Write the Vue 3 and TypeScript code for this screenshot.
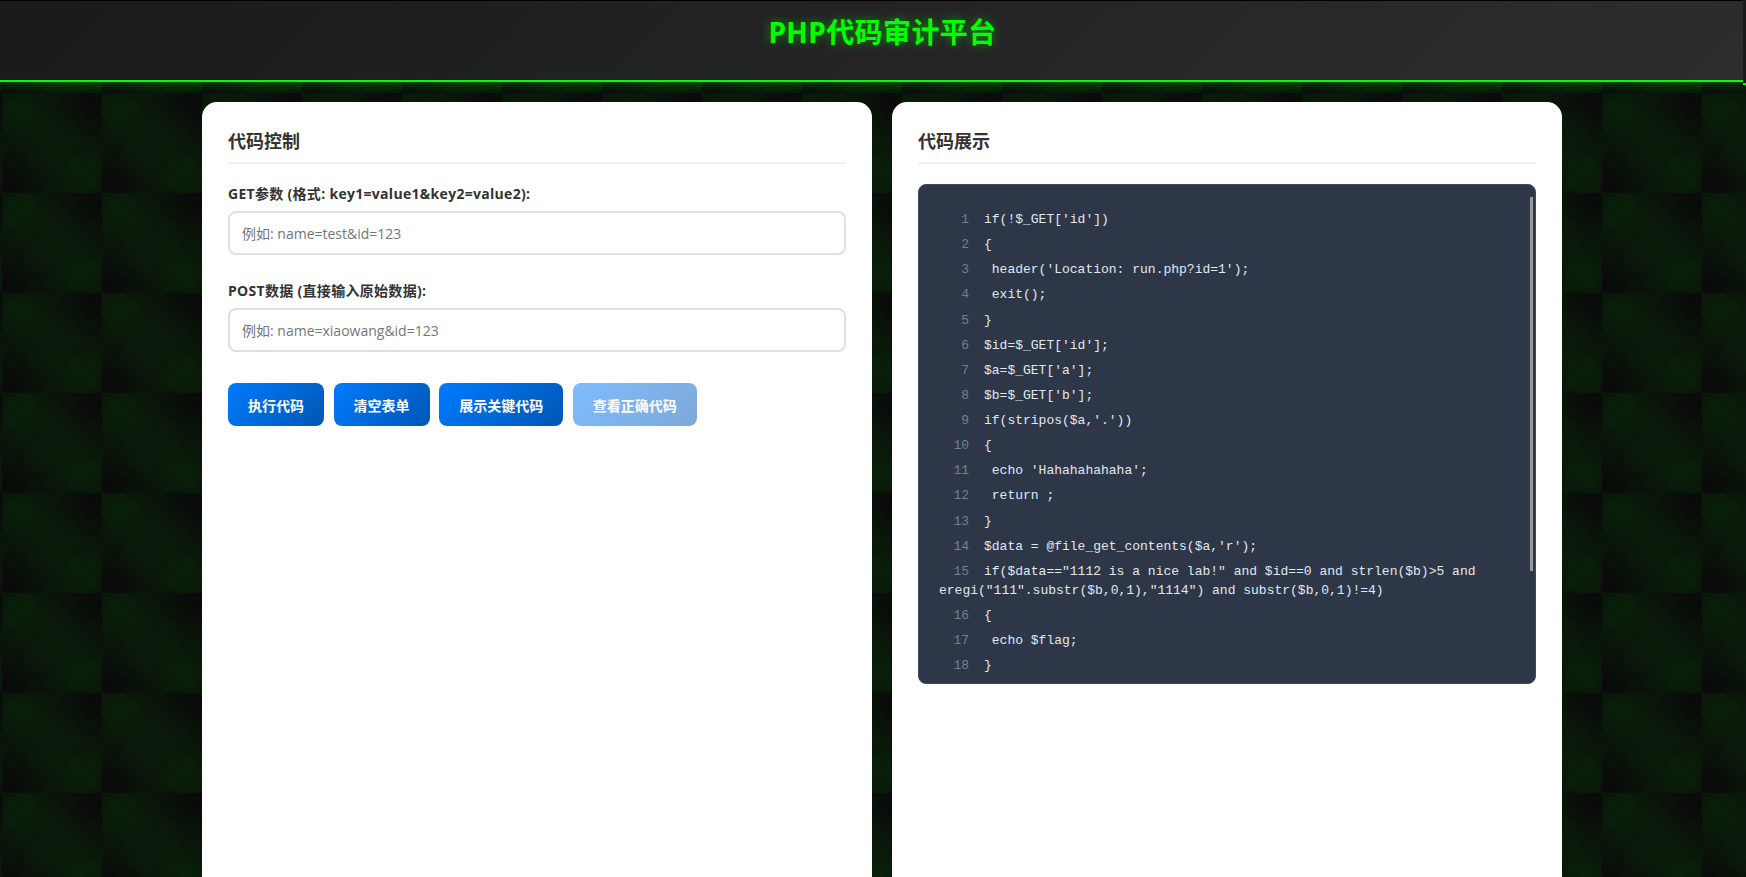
<script setup lang="ts">
const lines: string[] = [
  `if(!$_GET['id'])`,
  `{`,
  ` header('Location: run.php?id=1');`,
  ` exit();`,
  `}`,
  `$id=$_GET['id'];`,
  `$a=$_GET['a'];`,
  `$b=$_GET['b'];`,
  `if(stripos($a,'.'))`,
  `{`,
  ` echo 'Hahahahahaha';`,
  ` return ;`,
  `}`,
  `$data = @file_get_contents($a,'r');`,
  `if($data=="1112 is a nice lab!" and $id==0 and strlen($b)>5 and eregi("111".substr($b,0,1),"1114") and substr($b,0,1)!=4)`,
  `{`,
  ` echo $flag;`,
  `}`,
]
</script>

<template>
  <div class="page">
    <header class="top">
      <h1 class="title">PHP代码审计平台</h1>
    </header>
    <main class="columns">
      <section class="card">
        <h2 class="card-title">代码控制</h2>
        <div class="field">
          <label class="label">GET参数 (格式: key1=value1&amp;key2=value2):</label>
          <input class="input" type="text" placeholder="例如: name=test&id=123" />
        </div>
        <div class="field">
          <label class="label">POST数据 (直接输入原始数据):</label>
          <input class="input" type="text" placeholder="例如: name=xiaowang&id=123" />
        </div>
        <div class="actions">
          <button class="btn" type="button">执行代码</button>
          <button class="btn" type="button">清空表单</button>
          <button class="btn" type="button">展示关键代码</button>
          <button class="btn btn-dim" type="button">查看正确代码</button>
        </div>
      </section>
      <section class="card">
        <h2 class="card-title">代码展示</h2>
        <div class="code">
          <div class="code-scroll">
            <div v-for="(line, i) in lines" :key="i" class="code-line"><span class="num">{{ i + 1 }}</span>{{ line }}</div>
          </div>
          <div class="thumb"></div>
        </div>
      </section>
    </main>
  </div>
</template>

<style>
html, body {
  margin: 0;
  height: 877px;
  overflow: hidden;
}
body {
  background-color: #0a0a0a;
  background-image:
    repeating-linear-gradient(45deg, transparent 0, transparent 13.142px, rgba(0, 255, 0, 0.025) 13.142px, rgba(0, 255, 0, 0.025) 14.142px),
    repeating-linear-gradient(-45deg, transparent 0, transparent 13.142px, rgba(0, 255, 0, 0.025) 13.142px, rgba(0, 255, 0, 0.025) 14.142px),
    radial-gradient(circle at 20% 20%, rgba(0, 255, 0, 0.09) 0%, transparent 60%),
    radial-gradient(circle at 80% 80%, rgba(0, 255, 0, 0.09) 0%, transparent 60%);
  background-size: 100px 100px;
  background-position: 2px 93px;
}
</style>

<style scoped>
.page {
  font-family: "Open Sans", "Noto Sans CJK SC", sans-serif;
  color: #333;
}
.top {
  position: relative;
  box-sizing: border-box;
  width: calc(100% - 3px);
  height: 82px;
  border-top: 1px solid #000;
  border-bottom: 2px solid #0f0;
  background: linear-gradient(135deg, #1a1a1a, #2d2d2d);
  box-shadow: 0 2px 10px rgba(0, 255, 0, 0.3);
  padding: 11px 0 0 22px;
  text-align: center;
}
.top::after {
  content: "";
  position: absolute;
  top: -1px;
  right: -3px;
  width: 3px;
  height: 83px;
  border-bottom: 2px solid #0f0;
  background: #1a1a1a;
}
.title {
  margin: 0;
  font-family: "Open Sans", "Noto Sans CJK SC", sans-serif;
  font-size: 28px;
  line-height: 40px;
  font-weight: 700;
  letter-spacing: 0.4px;
  color: #0f0;
  text-shadow: 0 0 10px rgba(0, 255, 0, 0.5);
}
.columns {
  display: grid;
  grid-template-columns: 670px 670px;
  justify-content: center;
  gap: 20px;
  padding: 20px 0 0 18px;
}
.card {
  box-sizing: border-box;
  min-height: 900px;
  padding: 25px 26px;
  background: #fff;
  border-radius: 15px;
}
.card-title {
  margin: 0 0 20px;
  padding-bottom: 9px;
  border-bottom: 2px solid #f0f0f0;
  font-family: "Noto Sans CJK SC", sans-serif;
  font-size: 18px;
  line-height: 26px;
  font-weight: 700;
  color: #333;
}
.field {
  margin-bottom: 26px;
}
.label {
  display: block;
  margin-bottom: 7px;
  font-size: 14px;
  line-height: 20px;
  font-weight: 700;
  letter-spacing: 0.3px;
  color: #333;
}
.input {
  display: block;
  box-sizing: border-box;
  width: 100%;
  height: 44px;
  padding: 0 12px;
  border: 2px solid #e0e0e0;
  border-radius: 8px;
  outline: none;
  background: #fff;
  font-family: "Open Sans", "Noto Sans CJK SC", sans-serif;
  font-size: 14px;
}
.input::placeholder {
  color: #757575;
}
.actions {
  display: flex;
  gap: 9.6px;
  margin-top: 31px;
}
.btn {
  height: 43px;
  padding: 0 20px;
  border: none;
  border-radius: 8px;
  background: linear-gradient(135deg, #007bff, #0056b3);
  color: #fff;
  font-family: "Noto Sans CJK SC", sans-serif;
  font-size: 14px;
  font-weight: 700;
}
.btn-dim {
  opacity: 0.5;
}
.code {
  position: relative;
  box-sizing: border-box;
  height: 500px;
  border: 1px solid #3f4a5c;
  border-radius: 8px;
  background: #2d3748;
  overflow: hidden;
}
.code-scroll {
  padding: 22px 20px 20px;
  font-family: "Liberation Mono", monospace;
  font-size: 13px;
  line-height: 19.12px;
  color: #e2e8f0;
}
.code-line {
  padding: 3px 0;
  white-space: pre-wrap;
}
.num {
  display: inline-block;
  width: 30px;
  margin-right: 15px;
  text-align: right;
  color: #718096;
}
.thumb {
  position: absolute;
  top: 12px;
  right: 2px;
  width: 3px;
  height: 374px;
  background: #999;
}
</style>
